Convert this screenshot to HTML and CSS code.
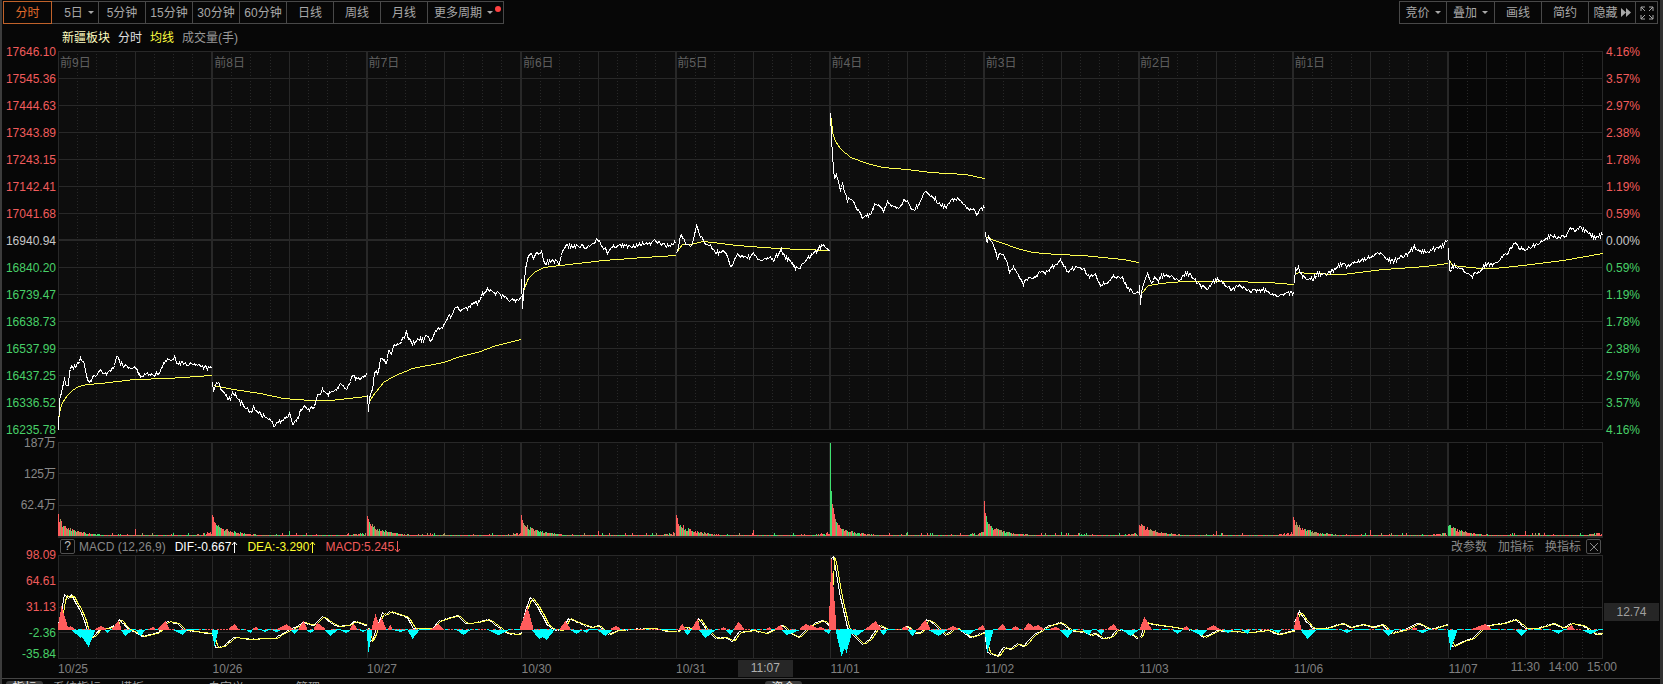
FILE: index.html
```
<!DOCTYPE html>
<html lang="zh-CN">
<head>
    <meta charset="UTF-8">
    <meta name="viewport" content="width=device-width, initial-scale=1.0">
    <title>新疆板块 分时</title>
    <link rel="stylesheet" href="styles.css">
</head>
<body>
    <div class="terminal">
        <header class="toolbar">
            <div class="btn-group">
                <button class="active">分时</button>
                <button class="days-btn">5日<i class="caret"></i></button>
                <button>5分钟</button>
                <button>15分钟</button>
                <button>30分钟</button>
                <button>60分钟</button>
                <button>日线</button>
                <button>周线</button>
                <button>月线</button>
                <button class="wide">更多周期<i class="caret"></i><i class="dot"></i></button>
            </div>
            <div class="btn-group tools">
                <button class="menu">竞价<i class="caret"></i></button>
                <button class="menu">叠加<i class="caret"></i></button>
                <button>画线</button>
                <button>简约</button>
                <button class="hide-btn">隐藏<svg class="forward" viewBox="0 0 10 9"><path d="M0 0l5 4.5L0 9zM5 0l5 4.5L5 9z"/></svg></button>
                <button class="full" aria-label="全屏"><svg viewBox="0 0 14 14"><path d="M1 5V1h4M9 1h4v4M13 9v4H9M5 13H1V9M1 1l4 4M13 1L9 5M13 13L9 9M1 13l4-4"/></svg></button>
            </div>
        </header>

        <div class="legend">
            <span class="name">新疆板块</span>
            <span class="price">分时</span>
            <span class="avg">均线</span>
            <span class="vol">成交量(手)</span>
        </div>

        <div class="panel price-panel">
            <div class="axis left" id="price-axis"></div>
            <div class="plot">
                <svg id="price" viewBox="58 51 1545 379" preserveAspectRatio="none"></svg>
                <div class="days" id="day-names"></div>
            </div>
            <div class="axis right" id="pct-axis"></div>
        </div>

        <div class="panel vol-panel">
            <div class="axis left">
                <span>187万</span>
                <span>125万</span>
                <span>62.4万</span>
            </div>
            <div class="plot">
                <svg id="volume" viewBox="58 442 1545 96" preserveAspectRatio="none"></svg>
            </div>
        </div>

        <div class="macd-head">
            <button class="box" aria-label="说明">?</button>
            <span class="title">MACD (12,26,9)</span>
            <span class="dif">DIF:-0.667<svg viewBox="0 0 7 12"><path d="M3.5 12V1M1 4l2.5-3L6 4"/></svg></span>
            <span class="dea">DEA:-3.290<svg viewBox="0 0 7 12"><path d="M3.5 12V1M1 4l2.5-3L6 4"/></svg></span>
            <span class="macd">MACD:5.245<svg viewBox="0 0 7 12"><path d="M3.5 0v11M1 8l2.5 3L6 8"/></svg></span>
            <div class="links">
                <a href="#">改参数</a>
                <a href="#">加指标</a>
                <a href="#">换指标</a>
                <button class="box" aria-label="关闭"><svg viewBox="0 0 8 8"><path d="M0 0l8 8M8 0L0 8"/></svg></button>
            </div>
        </div>

        <div class="panel macd-panel">
            <div class="axis left">
                <span class="up">98.09</span>
                <span class="up">64.61</span>
                <span class="up">31.13</span>
                <span class="down">-2.36</span>
                <span class="down last">-35.84</span>
            </div>
            <div class="plot">
                <svg id="macd" viewBox="58 555 1545 104" preserveAspectRatio="none"></svg>
            </div>
            <div class="axis right"><span class="tag">12.74</span></div>
        </div>

        <div class="dates">
            <span>10/25</span>
            <span>10/26</span>
            <span>10/27</span>
            <span>10/30</span>
            <span>10/31</span>
            <span>11/01</span>
            <span>11/02</span>
            <span>11/03</span>
            <span>11/06</span>
            <span>11/07</span>
            <b class="cursor-time">11:07</b>
            <div class="times">
                <span>11:30</span>
                <span>14:00</span>
                <span>15:00</span>
            </div>
        </div>

        <footer class="tabs">
            <span class="tab">指标</span>
            <span>系统指标</span>
            <span class="long">模板</span>
            <span class="long">自定义</span>
            <span>管理</span>
            <span class="tab center">资金</span>
        </footer>
    </div>

    <script src="script.js"></script>
</body>
</html>
```
FILE: styles.css
```
* {
    box-sizing: border-box;
}

body {
    margin: 0;
    background: #070707;
    color: #888;
    font: 12px/18px "Liberation Sans", "Noto Sans CJK SC", sans-serif;
}

.terminal {
    position: relative;
    display: flex;
    flex-direction: column;
    height: 100vh;
    overflow: hidden;
    border-left: 2px solid #3c3c3c;
    border-right: 3px solid #303030;
}

.terminal::before {
    content: "";
    position: absolute;
    left: -2px;
    top: 0;
    width: 2px;
    height: 73px;
    background: #c0622a;
}

button {
    font: inherit;
    color: inherit;
    background: none;
    border: none;
    padding: 0;
    cursor: pointer;
}

/* toolbar */
.toolbar {
    display: flex;
    justify-content: space-between;
    flex: none;
    padding: 1px 2px 0 1px;
    height: 26px;
}

.btn-group {
    display: flex;
    height: 23px;
    color: #a8a8a8;
}

.btn-group button {
    position: relative;
    display: flex;
    align-items: center;
    justify-content: center;
    gap: 5px;
    width: 47px;
    border: 1px solid #484848;
    border-left: none;
    white-space: nowrap;
}

.btn-group button.active {
    width: 49px;
    border: 1px solid #c0622a;
    color: #e06c2c;
}

.btn-group .days-btn {
    padding-left: 8px;
}

.btn-group .wide {
    width: 76px;
    justify-content: flex-start;
    padding-left: 6px;
}

.tools .menu {
    width: 48px;
}

.tools .menu:first-child {
    border-left: 1px solid #484848;
}

.btn-group .hide-btn {
    gap: 3px;
}

.btn-group .full {
    width: 22px;
}

.caret {
    border: 3px solid transparent;
    border-top-color: #a8a8a8;
    border-bottom: none;
}

.dot {
    position: absolute;
    right: 2px;
    top: 4px;
    width: 6px;
    height: 6px;
    border-radius: 50%;
    background: #ff4040;
}

.forward {
    width: 10px;
    height: 9px;
    fill: #a8a8a8;
}

.full svg {
    width: 14px;
    height: 14px;
    fill: none;
    stroke: #a8a8a8;
}

/* legend line over the chart */
.legend {
    display: flex;
    flex: none;
    gap: 8px;
    height: 25px;
    padding: 3px 0 0 60px;
}

.legend .name { color: #ffffc0; }
.legend .price { color: #e0e0e0; }
.legend .avg { color: #ffff40; }
.legend .vol { color: #999; }

/* chart panels */
.panel {
    display: grid;
    grid-template-columns: 56px 1fr 57px;
    grid-template-rows: 100%;
    flex: none;
}

.price-panel {
    height: 379px;
    margin-bottom: 12px;
}

.vol-panel {
    height: 96px;
}

.macd-panel {
    height: 104px;
}

.plot {
    position: relative;
    min-width: 0;
}

.plot svg {
    display: block;
    width: 100%;
    height: 100%;
}

.axis {
    display: flex;
    flex-direction: column;
    position: relative;
}

.left {
    align-items: flex-end;
    padding-right: 2px;
}

.right {
    padding-left: 3px;
}

.price-panel .axis {
    line-height: 27px;
    margin: -12px 0 -15px;
}

.vol-panel .axis {
    line-height: 31px;
    margin-top: -14px;
}

.macd-panel .axis {
    line-height: 26px;
    margin-top: -13px;
}

.macd-panel .last {
    line-height: 16px;
}

.up { color: #f05c5c; }
.zero { color: #c8c8c8; }
.down { color: #48d068; }

.tag {
    position: absolute;
    left: 1px;
    right: 1px;
    top: 61px;
    line-height: 18px;
    text-align: center;
    background: #262626;
    color: #a0a0a0;
}

.days {
    position: absolute;
    top: 3px;
    left: 0;
    right: 0;
    display: grid;
    grid-template-columns: repeat(10, 1fr);
    padding-left: 2px;
    color: #606060;
}

/* svg drawing */
#price, #volume, #macd {
    shape-rendering: crispEdges;
}

.bg { fill: #0d0d0d; }
.bg-today { fill: #070707; }

.grid {
    stroke: #282828;
    fill: none;
}

.grid.thick { stroke-width: 2; }
.grid.dotted { stroke-dasharray: 1 2; }

.line {
    fill: none;
    stroke: #fff;
}

.line.avg { stroke: #ffff50; }
.bar-up { fill: #ff5c5c; }
.bar-down { fill: #40e070; }
.bar-mix { fill: #a89860; }
.hist-down { fill: #00ffff; }

/* MACD header */
.macd-head {
    display: flex;
    align-items: center;
    flex: none;
    height: 17px;
    margin-left: 56px;
    margin-right: 57px;
    padding: 0 2px;
}

.box {
    width: 15px;
    height: 15px;
    border: 1px solid #505050;
    border-radius: 2px;
    line-height: 13px;
    color: #c0c0c0;
}

.box svg {
    display: block;
    margin: auto;
    width: 8px;
    height: 8px;
    fill: none;
    stroke: #888;
}

.macd-head span svg {
    width: 7px;
    height: 12px;
    fill: none;
    stroke: currentColor;
    vertical-align: -2px;
}

.macd-head .title { margin: 0 9px 0 4px; }
.macd-head .dif { color: #fff; margin-right: 9px; }
.macd-head .dea { color: #ffff30; margin-right: 9px; }
.macd-head .macd { color: #f05c5c; }

.links {
    display: flex;
    align-items: center;
    gap: 11px;
    margin-left: auto;
}

.links a {
    color: #888;
    text-decoration: none;
}

.links .box {
    margin-left: -6px;
}

/* dates */
.dates {
    position: relative;
    display: grid;
    grid-template-columns: repeat(10, 1fr);
    flex: none;
    height: 19px;
    margin: 0 57px 0 56px;
    line-height: 20px;
    color: #808080;
}

.cursor-time {
    position: absolute;
    left: 44%;
    top: 1px;
    width: 55px;
    line-height: 17px;
    font-weight: normal;
    text-align: center;
    background: #262626;
    color: #b0b0b0;
}

.times {
    position: absolute;
    left: 95%;
    right: 0;
    top: 0;
    line-height: 17px;
    display: flex;
    justify-content: space-between;
    margin: 0 -14px 0 -15px;
}

/* tab strip at the window's lower edge */
.tabs {
    position: relative;
    display: flex;
    flex: 1;
    border-top: 1px solid #444;
    padding: 2px 0 0 4px;
    overflow: hidden;
    line-height: 14px;
    color: #999;
}

.tabs span { width: 67px; }
.tabs .long { width: 88px; }

.tabs .tab {
    width: 37px;
    margin-right: 10px;
    border-radius: 3px 3px 0 0;
    background: #3c3c3c;
    text-align: center;
    color: #e0e0e0;
}

.tabs .center {
    position: absolute;
    left: 46%;
    top: 2px;
}
```
FILE: script.js
```
const LEFT = 58;
const DAY = 154.4;
const ZERO = 629;

// one string of "x,y" points for each trading day
const price = [
    "58,429 59,402 60,392 61,393 62,383 63,386 64,378 66,386 68,383 69,370 71,367 74,366 75,369 77,363 79,362 80,359 83,362 85,370 87,378 89,382 92,378 95,375 100,370 103,373 108,372 111,367 114,366 116,355 118,358 120,362 123,365 130,367 135,367 138,373 140,376 147,373 155,374 160,372 163,362 167,360 172,359 174,355 176,362 180,362 187,363 193,363 200,365 211,368",
    "212,380 213,393 215,385 218,382 221,390 224,392 227,397 230,399 232,391 237,398 240,402 245,406 250,412 253,407 263,416 267,417 271,421 274,426 277,422 282,420 287,417 289,411 292,423 297,419 300,410 303,406 307,410 313,407 317,395 322,390 328,394 335,390 340,384 347,388 352,375 357,378 362,377 366,373",
    "367,393 368,409 369,397 372,390 374,372 376,369 377,375 380,360 382,357 386,364 388,348 391,353 393,345 398,343 403,338 406,332 410,342 415,342 418,338 423,340 426,335 431,342 434,333 438,327 443,326 447,318 452,313 456,306 460,310 468,307 473,301 477,303 482,294 487,288 493,293 496,292 500,295 507,299 517,301 521,297",
    "521,279 522,306 523,293 525,270 527,258 529,253 533,256 536,251 538,255 541,253 544,262 550,261 555,261 559,264 562,252 565,245 573,246 580,245 585,248 592,243 597,238 601,245 607,251 615,245 620,245 630,246 643,243 648,244 654,241 660,243 668,246 675,242",
    "676,252 678,247 680,234 683,239 686,245 690,247 693,240 696,224 699,234 705,243 710,246 715,252 723,251 727,257 730,266 733,262 737,254 747,257 753,254 758,259 763,260 768,257 773,260 781,249 784,257 790,261 795,267 799,267 805,261 812,253 817,250 822,244 829,249",
    "830,113 831,137 832,155 833,167 834,178 836,172 837,178 840,188 842,183 844,192 847,200 850,197 853,200 857,208 862,217 866,216 871,212 875,203 879,204 883,210 887,203 892,206 898,207 903,201 907,200 912,210 918,205 924,191 932,195 938,203 946,207 950,199 956,198 963,203 968,210 973,209 977,214 980,208 984,207",
    "985,233 986,243 988,237 992,242 995,252 997,257 1000,252 1004,257 1009,270 1013,267 1018,275 1023,283 1027,278 1032,279 1038,273 1045,272 1052,267 1060,261 1067,271 1075,267 1083,269 1089,277 1095,273 1100,285 1107,282 1113,276 1122,278 1127,287 1133,291 1138,293",
    "1139,285 1140,302 1141,293 1143,282 1147,274 1151,283 1154,277 1158,280 1163,274 1168,276 1172,274 1177,281 1187,272 1193,278 1200,286 1207,288 1212,282 1217,279 1227,285 1231,290 1239,284 1246,291 1258,289 1269,292 1278,296 1286,292 1293,292",
    "1294,285 1295,267 1297,271 1298,267 1302,276 1307,279 1313,278 1317,273 1324,275 1331,271 1341,263 1347,266 1359,260 1368,258 1374,255 1381,252 1387,258 1392,261 1407,254 1414,247 1421,251 1435,249 1447,241",
    "1448,249 1449,271 1452,267 1456,265 1461,268 1466,274 1470,276 1478,272 1485,265 1494,263 1501,257 1508,251 1514,243 1520,249 1527,248 1534,245 1544,240 1549,235 1558,237 1566,235 1570,227 1575,231 1580,227 1587,233 1594,237 1602,235"
];

const average = [
    "58,420 59,413 60,408 62,402 67,395 72,390 78,386 87,384 100,383 117,381 133,379 167,378 211,375",
    "213,385 233,389 260,393 283,398 310,400 330,400 366,396",
    "368,402 375,392 383,382 393,376 412,368 443,362 460,356 477,352 493,346 520,339",
    "522,295 525,285 528,278 535,271 543,267 560,265 577,263 603,260 643,257 675,255",
    "676,252 682,244 690,244 702,241 713,242 737,245 777,248 829,250",
    "831,118 832,132 835,141 840,148 850,157 867,163 883,167 907,169 930,172 965,174 984,178",
    "986,237 1000,242 1017,248 1033,252 1057,254 1083,255 1123,259 1138,262",
    "1140,294 1148,285 1160,283 1183,281 1227,281 1269,282 1293,284",
    "1295,274 1298,272 1309,273 1342,274 1383,269 1425,266 1447,263",
    "1449,260 1452,265 1480,268 1494,268 1522,265 1563,260 1602,253"
];

const dif = [
    "58,623 61,613 64,594 68,598 71,594 75,602 80,610 85,623 88,638 93,636 100,628 107,628 115,625 119,619 127,628 133,631 142,636 150,634 158,632 163,625 167,621 177,623 183,629 200,632 211,633",
    "212,633 214,642 215,647 223,646 233,637 250,639 263,638 275,638 282,633 290,629 298,625 303,622 313,625 322,616 330,622 337,626 348,625 354,621 366,625",
    "368,628 369,642 373,637 377,625 382,612 385,615 389,611 407,617 413,628 432,628 438,621 447,618 457,615 465,623 477,622 488,619 497,626 507,633 517,634 521,632",
    "522,623 525,610 530,597 535,603 542,615 547,625 553,629 562,630 568,618 577,622 590,627 598,625 608,634 617,630 630,629 653,628 668,631 676,631",
    "677,631 682,627 692,628 698,618 705,628 715,638 725,637 732,641 738,632 753,630 765,633 782,625 790,633 798,637 810,625 822,620 829,625",
    "830,610 831,558 833,556 836,573 840,597 847,627 850,632 857,639 862,644 870,638 878,625 887,629 900,629 907,626 915,633 921,632 926,619 933,623 945,635 955,627 970,637 984,632",
    "985,637 987,652 997,656 1003,647 1010,649 1017,643 1023,646 1033,635 1047,626 1060,622 1070,630 1085,632 1090,635 1095,633 1101,638 1110,637 1117,629 1125,630 1138,639",
    "1140,637 1145,622 1153,624 1167,626 1193,630 1203,637 1217,630 1227,631 1250,632 1267,630 1278,634 1294,630",
    "1294,622 1299,611 1305,620 1312,628 1325,628 1342,623 1350,627 1362,624 1373,627 1382,624 1390,633 1403,630 1417,623 1430,629 1447,624",
    "1449,638 1452,646 1462,641 1472,638 1480,630 1488,625 1503,623 1515,619 1525,628 1537,628 1553,623 1562,628 1570,623 1582,625 1595,634 1602,633"
];

// histogram humps: start, peak, end, height (negative hangs below zero)
const humps = [
    [58, 61, 68, 23], [66, 70, 74, 3], [72, 80, 90, -8], [78, 88, 95, -17], [95, 101, 106, 3], [105, 107, 110, -3],
    [112, 118, 121, 8], [121, 125, 132, -6], [136, 140, 145, -6], [150, 153, 155, 2], [158, 165, 169, 8], [174, 182, 187, -5],
    [212, 214, 218, -16], [229, 234, 238, 5], [247, 250, 252, -3], [253, 256, 258, 2], [262, 264, 268, -2], [273, 276, 280, -2],
    [278, 286, 292, 5], [291, 294, 298, -4], [299, 303, 307, 8], [307, 310, 314, -3], [314, 317, 325, 6], [325, 330, 337, -6],
    [341, 346, 350, -3], [350, 353, 357, 5], [360, 363, 366, -2], [367, 368, 372, -22], [372, 375, 380, 15], [376, 381, 386, 11],
    [388, 390, 392, 4], [394, 400, 406, -2], [408, 412, 419, -9], [432, 438, 443, 5], [457, 463, 470, -5], [489, 498, 508, -5],
    [520, 527, 533, 22], [532, 539, 552, -9], [534, 546, 554, -10], [560, 565, 570, 8], [571, 576, 582, -4], [583, 586, 589, -3],
    [598, 605, 612, -6], [611, 616, 620, 3], [679, 682, 685, 5], [684, 687, 691, -5], [692, 697, 700, 10], [699, 705, 715, -8],
    [721, 723, 726, 2], [726, 730, 733, -5], [734, 738, 744, 7], [767, 769, 771, 2], [775, 780, 783, 4], [782, 786, 800, -5],
    [800, 805, 815, 5], [803, 811, 818, 4], [816, 820, 824, 2], [824, 828, 831, -4], [829, 831, 836, 70], [836, 841, 852, -26],
    [838, 846, 852, -23], [846, 856, 864, -6], [866, 875, 881, 8], [880, 883, 887, -5], [902, 905, 908, 3], [908, 912, 916, -6],
    [918, 925, 930, 9], [929, 938, 947, -6], [948, 952, 958, 3], [960, 968, 975, -5], [978, 982, 985, 4], [985, 987, 993, -22],
    [998, 1002, 1006, 5], [1012, 1015, 1019, 3], [1024, 1028, 1036, 6], [1028, 1038, 1043, 4], [1050, 1055, 1060, 2],
    [1060, 1067, 1073, -8], [1083, 1088, 1092, -5], [1097, 1101, 1104, -5], [1108, 1113, 1117, 5], [1123, 1130, 1138, -6],
    [1140, 1144, 1151, 12], [1173, 1177, 1182, -4], [1183, 1186, 1189, 3], [1191, 1201, 1207, -6], [1207, 1213, 1219, 4],
    [1223, 1227, 1233, -3], [1242, 1247, 1250, -4], [1273, 1278, 1281, -3], [1294, 1297, 1301, 16], [1301, 1307, 1316, -9],
    [1342, 1346, 1352, -3], [1383, 1388, 1394, -6], [1412, 1414, 1417, 2], [1417, 1422, 1428, -3], [1448, 1450, 1457, -20],
    [1472, 1485, 1491, 5], [1516, 1521, 1527, -6], [1552, 1558, 1563, -4], [1567, 1571, 1574, 4], [1582, 1590, 1598, -4]
];

const openVolume = [22, 21, 20, 21, 21, 93, 35, 11, 19, 10];

let seed = 7;
function rand() {
    seed = (seed * 16807) % 2147483647;
    return seed / 2147483647;
}

function parse(str) {
    return str.split(' ').map(p => p.split(',').map(Number));
}

function valueAt(points, x) {
    if (x <= points[0][0]) return points[0][1];
    for (let i = 1; i < points.length; i++) {
        const [x0, y0] = points[i - 1];
        const [x1, y1] = points[i];
        if (x <= x1) return y0 + (y1 - y0) * (x - x0) / (x1 - x0);
    }
    return points[points.length - 1][1];
}

function sample(points, noise, lag) {
    const end = points[points.length - 1][0];
    let d = '';
    for (let x = points[0][0]; x <= end; x++) {
        let y = valueAt(points, x);
        if (lag) {
            y = (valueAt(points, x - lag) + valueAt(points, x - lag + 2)) / 2;
        }
        y += (rand() - 0.5) * noise;
        d += (d ? 'L' : 'M') + (x + 0.5) + ' ' + (Math.round(y) + 0.5);
    }
    return d;
}

function path(cls, d) {
    return `<path class="${cls}" d="${d}"/>`;
}

function grid(top, bottom, rows, thickDays) {
    const last = Math.round(LEFT + DAY * 9);
    let thin = '', thick = '', dotted = '';
    for (let i = 0; i <= 10; i++) {
        const x = Math.round(LEFT + DAY * i);
        if (thickDays && i > 0 && i < 10) thick += `M${x} ${top}V${bottom}`;
        else thin += `M${x + 0.5} ${top}V${bottom}`;
        if (i === 10) break;
        for (let k = 1; k < 8; k++) {
            const line = `M${Math.round(x + k * 19.2) + 0.5} ${top}V${bottom}`;
            if (k === 4 || (i === 9 && k % 2 === 0)) thin += line;
            else dotted += line;
        }
    }
    rows.forEach(y => thin += `M${LEFT} ${y + 0.5}H1603`);
    return `<rect class="bg" x="${LEFT}" y="${top}" width="${last - LEFT}" height="${bottom - top}"/>`
        + `<rect class="bg-today" x="${last}" y="${top}" width="155" height="${bottom - top}"/>`
        + path('grid dotted', dotted) + path('grid', thin) + path('grid thick', thick);
}

function drawPrice() {
    const rows = [];
    for (let i = 0; i <= 14; i++) rows.push(51 + i * 27);
    let out = grid(51, 430, rows, true) + path('grid thick', `M${LEFT} 240H1603`);
    average.forEach(s => out += path('line avg', sample(parse(s), 0)));
    price.forEach(s => out += path('line', sample(parse(s), 4)));
    document.getElementById('price').innerHTML = out;
}

function drawVolume() {
    let out = grid(442, 538, [442, 473, 505], true) + path('grid thick', `M${LEFT} 537H1603`);
    const bars = { 'bar-up': '', 'bar-down': '', 'bar-mix': '' };
    openVolume.forEach((open, day) => {
        for (let i = 0; i < 154; i++) {
            let h = 1;
            if (i === 0) h = open;
            else if (i < 70) h = Math.min(open, 12) * Math.exp(-i / 20) * (0.7 + rand() * 0.5) + (open - 8) * 0.55 * Math.exp(-i / 3);
            if (i > 138) h = 1 + rand() * (i - 136) / 5;
            if (i === 77) h = 3 + rand() * 4;
            if (i > 50 && rand() > 0.9) h = 2 + rand() * 1.5;
            h = Math.max(1, Math.round(h));
            const r = rand();
            let cls = r < 0.5 ? 'bar-up' : r < 0.75 ? 'bar-down' : 'bar-mix';
            if (i < 2) cls = day === 5 || day === 9 ? 'bar-down' : 'bar-up';
            bars[cls] += `M${Math.round(LEFT + DAY * day) + i} 536v${-h}h1v${h}z`;
        }
    });
    for (const cls in bars) out += path(cls, bars[cls]);
    document.getElementById('volume').innerHTML = out;
}

function drawMacd() {
    let out = grid(555, 659, [555, 581, 607, 632, 658], false);
    let up = '', down = '';
    // a thin broken strip along zero
    for (let x = LEFT; x < 1602; x += 3) {
        if (rand() > 0.4) down += `M${x} ${ZERO}h3v1h-3z`;
        else up += `M${x} ${ZERO}h2v1h-2z`;
    }
    humps.forEach(([from, peak, to, height]) => {
        for (let x = from; x < to; x++) {
            const k = x < peak ? (x - from + 1) / (peak - from + 1) : (to - x) / (to - peak);
            const h = Math.round(Math.abs(height) * k);
            if (height > 0) up += `M${x} ${ZERO + 1}v${-h - 1}h1v${h + 1}z`;
            else down += `M${x} ${ZERO}v${h + 1}h1v${-h - 1}z`;
        }
    });
    dif.forEach(s => out += path('line', sample(parse(s), 1)));
    dif.forEach(s => out += path('line avg', sample(parse(s), 0, 3)));
    out += path('hist-down', down) + path('bar-up', up);
    document.getElementById('macd').innerHTML = out;
}

function fillAxes() {
    const values = ['17646.10', '17545.36', '17444.63', '17343.89', '17243.15', '17142.41', '17041.68', '16940.94',
        '16840.20', '16739.47', '16638.73', '16537.99', '16437.25', '16336.52', '16235.78'];
    const percents = ['4.16%', '3.57%', '2.97%', '2.38%', '1.78%', '1.19%', '0.59%', '0.00%',
        '0.59%', '1.19%', '1.78%', '2.38%', '2.97%', '3.57%', '4.16%'];
    const color = i => i < 7 ? 'up' : i > 7 ? 'down' : 'zero';
    const render = list => list.map((v, i) => `<span class="${color(i)}">${v}</span>`).join('');
    document.getElementById('price-axis').innerHTML = render(values);
    document.getElementById('pct-axis').innerHTML = render(percents);

    let names = '';
    for (let i = 9; i > 0; i--) names += `<span>前${i}日</span>`;
    document.getElementById('day-names').innerHTML = names;
}

fillAxes();
drawPrice();
drawVolume();
drawMacd();
```
